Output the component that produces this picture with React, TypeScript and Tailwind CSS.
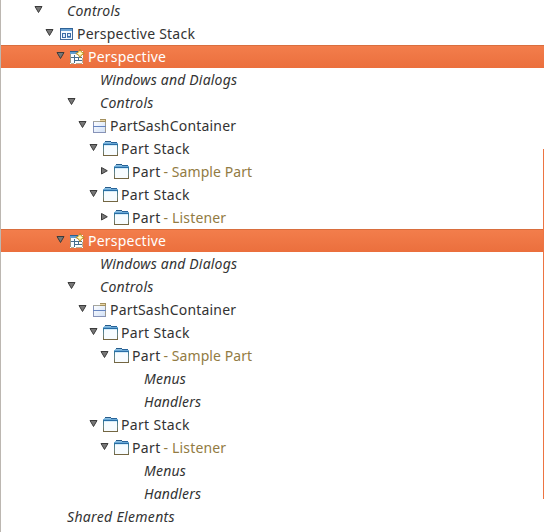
import React from "react";

type IconKind = "stack" | "perspective" | "sash" | "part";
type Row = {
  indent: string;
  text: string;
  tracking: string;
  arrow?: "open" | "closed";
  icon?: IconKind;
  note?: string;
  noteTracking?: string;
  italic?: boolean;
  selected?: boolean;
};

function Icon({ kind }: { kind: IconKind }) {
  if (kind === "stack")
    return (
      <svg width="16" height="16" shapeRendering="crispEdges" className="shrink-0">
        <rect x="2.5" y="2.5" width="12" height="11" fill="#f4f9ff" stroke="#41699a" />
        <rect x="2" y="2" width="13" height="1" fill="#2e6296" />
        <rect x="3" y="3" width="11" height="2" fill="#6aa2d4" />
        <rect x="4.5" y="7.5" width="3" height="4" fill="#dceafa" stroke="#3b6da8" />
        <rect x="9.5" y="7.5" width="3" height="3" fill="#dceafa" stroke="#3b6da8" />
        <rect x="9" y="11" width="4" height="1" fill="#6f9bca" />
      </svg>
    );
  if (kind === "perspective")
    return (
      <svg width="16" height="16" className="shrink-0">
        <g shapeRendering="crispEdges">
          <rect x="1" y="2" width="13" height="13" fill="#f9fcff" />
          <path d="M1.5 2V14" stroke="#9b9480" />
          <rect x="1" y="2" width="8" height="1" fill="#2d608f" />
          <rect x="1" y="3" width="9" height="2" fill="#629dce" />
          <path d="M5.5 6V14M2 8.5H13M9.5 8V11M6 11.5H13" stroke="#456d8c" fill="none" />
          <path d="M2 14.5H5M7 14.5H13M13.5 9V14" stroke="#b8ae94" fill="none" />
        </g>
        <path d="M11 0.5L12.5 3L15.2 4.5L12.5 6L11 8.7L9.5 6L6.8 4.5L9.5 3Z" fill="#ffe780" stroke="#a88422" strokeWidth="0.9" />
        <path d="M11 2.5V6.5M9 4.5H13" stroke="#fffbd8" />
      </svg>
    );
  if (kind === "sash")
    return (
      <svg width="16" height="16" shapeRendering="crispEdges" className="shrink-0">
        <defs>
          <linearGradient id="paneFill" x1="0" y1="0" x2="1" y2="1">
            <stop stopColor="#ffffff" />
            <stop offset="1" stopColor="#cfdff6" />
          </linearGradient>
        </defs>
        <rect x="2" y="3" width="13" height="12" fill="url(#paneFill)" />
        <path d="M2.5 3V14.5H14.5" fill="none" stroke="#8793b8" />
        <path d="M14.5 3V14" stroke="#9d9a90" />
        <path d="M2 3.5H9" stroke="#a6a79d" />
        <path d="M9 3.5V1.5H14.5V3.5Z" fill="#e9d6a5" stroke="#a3905f" />
        <path d="M9 2.5H14" stroke="#e9d6a5" />
        <path d="M2 8.5H15" stroke="#6685c1" />
      </svg>
    );
  return (
    <svg width="16" height="16" shapeRendering="crispEdges" className="shrink-0">
      <defs>
        <linearGradient id="frameStroke" gradientUnits="userSpaceOnUse" x1="0" y1="3" x2="0" y2="15">
          <stop stopColor="#29749f" />
          <stop offset="0.55" stopColor="#6b8583" />
          <stop offset="1" stopColor="#75633b" />
        </linearGradient>
      </defs>
      <rect x="1.5" y="3.5" width="14" height="11" fill="#f7fcff" stroke="url(#frameStroke)" />
      <rect x="3" y="0" width="6" height="1" fill="#275b88" />
      <rect x="2" y="1" width="8" height="1" fill="#8bbfe2" />
      <rect x="9" y="1" width="6" height="1" fill="#28649a" />
      <rect x="1" y="2" width="15" height="1" fill="#6aa9d6" />
      <rect x="2" y="3" width="13" height="1" fill="#286da7" />
      <rect x="2" y="4" width="13" height="1" fill="#d4edf9" />
    </svg>
  );
}

function Arrow({ kind }: { kind?: "open" | "closed" }) {
  return (
    <svg width="10" height="10" className="mb-[3px] shrink-0">
      {kind === "open" && <path d="M2 2.5H9L5.5 8.5Z" fill="#777777" stroke="#3b3b3b" />}
      {kind === "closed" && <path d="M2.5 2.5V9L8.3 5.75Z" fill="#777777" stroke="#3b3b3b" />}
    </svg>
  );
}

const windows: Row = { indent: "pl-[66px]", text: "Windows and Dialogs", tracking: "tracking-[0.19px]", italic: true };
const perspective: Row = { indent: "pl-[55px]", arrow: "open", icon: "perspective", text: "Perspective", tracking: "tracking-[0.22px]", selected: true };
const controls: Row = { indent: "pl-[66px]", arrow: "open", text: "Controls", tracking: "tracking-[0.24px]", italic: true };
const sash: Row = { indent: "pl-[77px]", arrow: "open", icon: "sash", text: "PartSashContainer", tracking: "tracking-[0.2px]" };
const partStack: Row = { indent: "pl-[88px]", arrow: "open", icon: "part", text: "Part Stack", tracking: "tracking-[0.32px]" };
const samplePart: Row = { indent: "pl-[99px]", icon: "part", text: "Part", note: "- Sample Part", tracking: "tracking-[0.35px]", noteTracking: "tracking-[0.07px]" };
const listener: Row = { indent: "pl-[99px]", icon: "part", text: "Part", note: "- Listener", tracking: "tracking-[0.35px]", noteTracking: "tracking-[0.16px]" };
const menus: Row = { indent: "pl-[110px]", text: "Menus", tracking: "tracking-[0.22px]", italic: true };
const handlers: Row = { indent: "pl-[110px]", text: "Handlers", tracking: "tracking-[0.15px]", italic: true };

const rows: Row[] = [
  { ...controls, indent: "pl-[33px]" },
  { indent: "pl-[44px]", arrow: "open", icon: "stack", text: "Perspective Stack", tracking: "tracking-[0.23px]" },
  perspective,
  windows,
  controls,
  sash,
  partStack,
  { ...samplePart, arrow: "closed" },
  partStack,
  { ...listener, arrow: "closed" },
  perspective,
  windows,
  controls,
  sash,
  partStack,
  { ...samplePart, arrow: "open" },
  menus,
  handlers,
  partStack,
  { ...listener, arrow: "open" },
  menus,
  handlers,
  { indent: "pl-[33px]", text: "Shared Elements", tracking: "tracking-[0.33px]", italic: true },
];

export default function App() {
  return (
    <main className="relative h-[532px] w-[544px] overflow-hidden border-l border-[#bcb7b1] bg-white font-['Noto_Sans',sans-serif] text-[14px] text-[#333333]">
      <div className="-mt-px">
        {rows.map((row, index) => (
          <div
            key={index}
            className={`h-[23px] ${row.selected ? "bg-linear-to-b from-[#f37e4c] to-[#eb6f3d] text-white shadow-[inset_0_1px_#d96e3e]" : ""}`}
          >
            <div className={`-ml-px flex h-full items-center whitespace-pre ${row.indent}`}>
              <Arrow kind={row.arrow} />
              <span className={row.icon ? "mr-[3px] ml-[4px] w-[16px]" : "w-[24px]"}>
                {row.icon && <Icon kind={row.icon} />}
              </span>
              <span className={`${row.tracking} ${row.italic ? "italic" : ""}`}>{row.text}</span>
              {row.note && <span className={`ml-[3px] text-[#927b43] ${row.noteTracking}`}>{row.note}</span>}
            </div>
          </div>
        ))}
      </div>
      <div className="absolute top-[149px] right-0 h-[350px] w-px bg-[#ed7442]" />
    </main>
  );
}
